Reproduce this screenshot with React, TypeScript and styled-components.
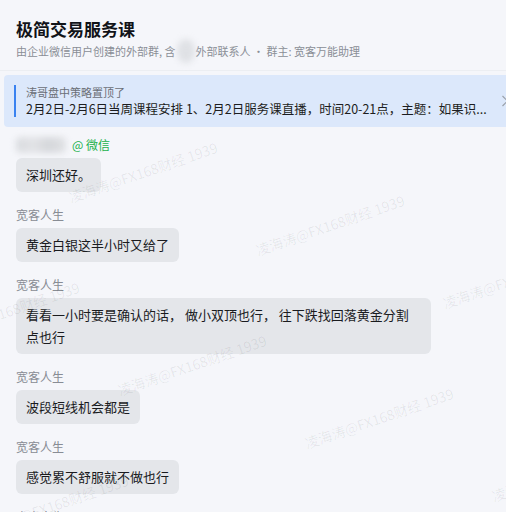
import React from 'react';
import styled, { createGlobalStyle } from 'styled-components';

const GlobalStyle = createGlobalStyle`
  html, body {
    margin: 0;
    padding: 0;
    background: #f5f6fa;
  }
  body {
    font-family: "Noto Sans CJK SC", "Noto Sans", sans-serif;
    color: #1f1f1f;
  }
`;

const Page = styled.div`
  width: 506px;
  height: 512px;
  overflow: hidden;
  display: flex;
  flex-direction: column;
`;

const Header = styled.header`
  padding: 17px 16px 11px;
  border-bottom: 1px solid #eceef2;
`;

const Title = styled.h1`
  margin: 0;
  font-size: 17px;
  line-height: 24px;
  font-weight: 700;
  color: #111318;
`;

const Subtitle = styled.div`
  margin-top: 2px;
  font-size: 11px;
  line-height: 16px;
  color: #8a8e96;
  display: flex;
  align-items: center;
  white-space: nowrap;
`;

// blurred-out names / counts
const Blur = styled.span<{ $w: number; $h: number; $round?: boolean }>`
  display: inline-block;
  flex: none;
  width: ${(p) => p.$w}px;
  height: ${(p) => p.$h}px;
  margin: ${(p) => (p.$round ? '-5px 1px' : '0')};
  border-radius: ${(p) => (p.$round ? '50%' : '5px')};
  background: ${(p) =>
    p.$round
      ? '#dfe1e5'
      : 'linear-gradient(90deg, #d9dbdf, #e2e3e6 35%, #d5d7db 65%, #e0e1e4)'};
  filter: blur(3px);
`;

const Banner = styled.div`
  margin: 4px -8px 0 4px;
  background: #dce8fb;
  border-radius: 4px;
  padding: 10px 5px 10px 10px;
  display: flex;
  align-items: center;
`;

const Pinned = styled.div`
  flex: 1;
  min-width: 0;
  border-left: 2px solid #3a82f0;
  padding-left: 10px;
`;

const PinTitle = styled.div`
  font-size: 11px;
  line-height: 15px;
  color: #6b6f77;
`;

const PinText = styled.div`
  font-size: 12.5px;
  line-height: 17px;
  color: #1c1d20;
  white-space: nowrap;
  overflow: hidden;
  text-overflow: ellipsis;
`;

const Chevron = styled.svg`
  flex: none;
  margin-left: 10px;
  width: 8px;
  height: 12px;
`;

const MessageList = styled.div`
  position: relative;
  flex: 1;
  overflow: hidden;
  padding: 9px 16px 0;
`;

const SenderRow = styled.div`
  display: flex;
  align-items: center;
  height: 17px;
  font-size: 12px;
  line-height: 17px;
`;

const Source = styled.span`
  margin-left: 6px;
  color: #22b24c;
`;

const Message = styled.div<{ $first?: boolean }>`
  display: flex;
  flex-direction: column;
  align-items: flex-start;
  margin-top: ${(p) => (p.$first ? 5 : 14)}px;
`;

const Name = styled.div`
  font-size: 12px;
  line-height: 17px;
  color: #888c94;
  margin-bottom: 5px;
`;

const Bubble = styled.div`
  box-sizing: border-box;
  max-width: 415px;
  padding: 6px 10px;
  border-radius: 6px;
  background: #e4e6ea;
  font-size: 13px;
  line-height: 22px;
  color: #1a1b1e;
`;

const Watermarks = styled.div`
  position: absolute;
  inset: 0;
  pointer-events: none;
`;

const Mark = styled.span`
  position: absolute;
  transform: translate(-50%, -50%) rotate(-19deg);
  white-space: nowrap;
  font-size: 14px;
  color: rgba(0, 0, 0, 0.07);
`;

const messages = [
  { name: '宽客人生', text: '黄金白银这半小时又给了' },
  {
    name: '宽客人生',
    text: '看看一小时要是确认的话， 做小双顶也行， 往下跌找回落黄金分割点也行',
  },
  { name: '宽客人生', text: '波段短线机会都是' },
  { name: '宽客人生', text: '感觉累不舒服就不做也行' },
  { name: '宽客人生', text: '关注一下' },
];

// watermark lattice, relative to the message list
const marks: { x: number; y: number }[] = [];
for (let i = -3; i <= 3; i++) {
  for (let j = -2; j <= 3; j++) {
    const x = 143 + i * 187 + j * 49;
    const y = 45 + i * 53 + j * 193;
    if (x > -90 && x < 600 && y > -20 && y < 420) marks.push({ x, y });
  }
}

export default function App() {
  return (
    <Page>
      <GlobalStyle />
      <Header>
        <Title>极简交易服务课</Title>
        <Subtitle>
          由企业微信用户创建的外部群, 含
          <Blur $w={18} $h={24} $round />
          外部联系人 · 群主: 宽客万能助理
        </Subtitle>
      </Header>

      <Banner>
        <Pinned>
          <PinTitle>涛哥盘中策略置顶了</PinTitle>
          <PinText>2月2日-2月6日当周课程安排 1、2月2日服务课直播，时间20-21点，主题：如果识...</PinText>
        </Pinned>
        <Chevron viewBox="0 0 8 12">
          <path d="M1.5 1 L6.5 6 L1.5 11" fill="none" stroke="#9aa0a9" strokeWidth="1.2" />
        </Chevron>
      </Banner>

      <MessageList>
        <SenderRow>
          <Blur $w={50} $h={16} />
          <Source>@ 微信</Source>
        </SenderRow>
        <Message $first>
          <Bubble>深圳还好。</Bubble>
        </Message>
        {messages.map((m, i) => (
          <Message key={i}>
            <Name>{m.name}</Name>
            <Bubble>{m.text}</Bubble>
          </Message>
        ))}
        <Watermarks>
          {marks.map((m, i) => (
            <Mark key={i} style={{ left: m.x, top: m.y }}>
              凌海涛@FX168财经 1939
            </Mark>
          ))}
        </Watermarks>
      </MessageList>
    </Page>
  );
}
